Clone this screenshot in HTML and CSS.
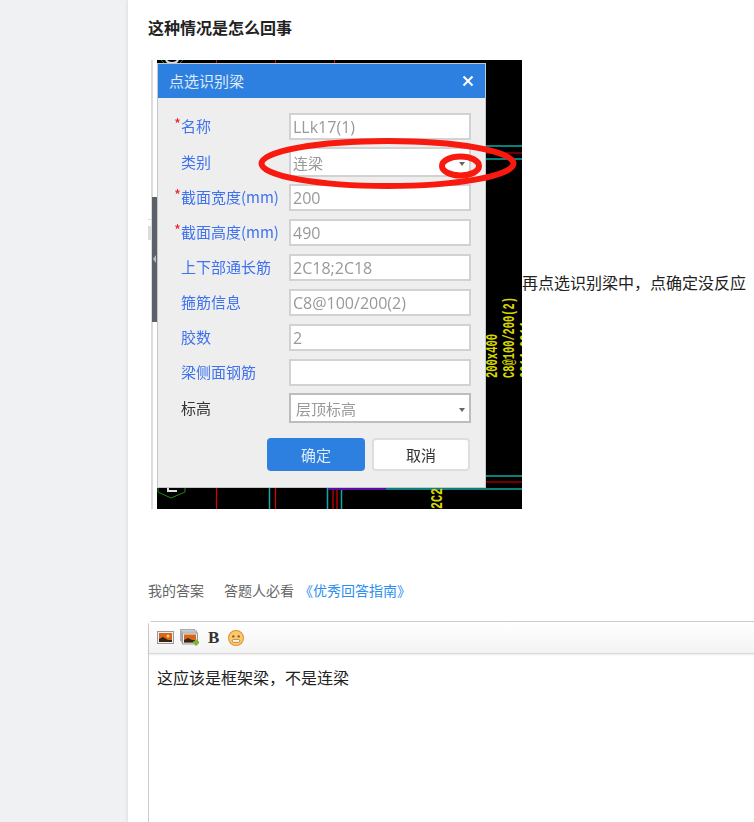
FILE: index.html
```html
<!DOCTYPE html>
<html lang="zh-CN">
<head>
    <meta charset="UTF-8">
    <meta name="viewport" content="width=device-width, initial-scale=1.0">
    <title>这种情况是怎么回事</title>
    <link rel="stylesheet" href="styles.css">
</head>
<body>
    <div class="page">
        <div class="side"></div>
        <div class="main">
            <h1 class="title">这种情况是怎么回事</h1>

            <div class="question">
                <div class="shot">
                    <!-- CAD drawing behind the dialog, viewBox uses page coordinates -->
                    <svg class="art" viewBox="148 60 374 449">
                        <rect x="148" y="60" width="374" height="449" fill="#fff"/>
                        <rect x="151" y="60" width="2" height="449" fill="#dcdcdc"/>
                        <rect x="157" y="60" width="365" height="449" fill="#000"/>
                        <rect x="148" y="219" width="9" height="1" fill="#ddd"/>
                        <rect x="148" y="226" width="9" height="14" fill="#dcdcdc"/>
                        <rect x="152" y="197" width="6" height="125" fill="#5b6168"/>
                        <path d="M156 255l-3 4 3 4z" fill="#b8bcc0"/>
                        <path d="M216.500 60v4M275.500 60v4M334.500 60v4" stroke="#e00000" stroke-width="1"/>
                        <path d="M166 60c2 4 10 4 12 0" stroke="#ddd" stroke-width="2" fill="none"/>
                        <path d="M161 60l3 3M183 60l-3 3" stroke="#1a8a1a" fill="none"/>
                        <path d="M486 146h36M486 159h36M385 476h137M385 489h137M269.500 487v22M327.500 487v22M341.500 487v22" stroke="#0fa8a8" stroke-width="1.500"/>
                        <path d="M486 153h36" stroke="#700000" stroke-width="2"/>
                        <path d="M486 482h36M216.500 487v22M275.500 487v22M333 487v22M337 487v22" stroke="#e00000" stroke-width="1.200"/>
                        <path d="M328 488.500h58" stroke="#5a0ca8" stroke-width="3"/>
                        <path d="M158 487v5l13 6 14-6v-5" stroke="#1a8a1a" fill="none"/>
                        <path d="M168 487v4h9" stroke="#ddd" stroke-width="2" fill="none"/>
                        <g class="cad-text">
                            <text transform="translate(497 378) rotate(-90)" textLength="44" lengthAdjust="spacingAndGlyphs">200x400</text>
                            <text transform="translate(514 378) rotate(-90)" textLength="81" lengthAdjust="spacingAndGlyphs">C8@100/200(2)</text>
                            <text transform="translate(531 378) rotate(-90)" textLength="56" lengthAdjust="spacingAndGlyphs">2C14;2C14</text>
                            <text transform="translate(442 509) rotate(-90)" textLength="28" lengthAdjust="spacingAndGlyphs">2C25</text>
                        </g>
                    </svg>

                    <div class="dialog">
                        <div class="dialog-head">
                            <span>点选识别梁</span>
                            <svg class="close" viewBox="0 0 12 12"><path d="M1.500 1.500l9 9M10.500 1.500l-9 9"/></svg>
                        </div>
                        <div class="dialog-body">
                            <div class="row"><label class="need">名称</label><div class="field">LLk17(1)</div></div>
                            <div class="row tall"><label>类别</label><div class="field select">连梁<i class="arrow"></i></div></div>
                            <div class="row"><label class="need">截面宽度(mm)</label><div class="field">200</div></div>
                            <div class="row"><label class="need">截面高度(mm)</label><div class="field">490</div></div>
                            <div class="row"><label>上下部通长筋</label><div class="field">2C18;2C18</div></div>
                            <div class="row"><label>箍筋信息</label><div class="field">C8@100/200(2)</div></div>
                            <div class="row"><label>胶数</label><div class="field">2</div></div>
                            <div class="row"><label>梁侧面钢筋</label><div class="field"></div></div>
                            <div class="row tall"><label class="plain">标高</label><div class="field select level">层顶标高<i class="arrow"></i></div></div>
                            <div class="buttons">
                                <button class="ok">确定</button>
                                <button class="cancel">取消</button>
                            </div>
                        </div>
                    </div>

                    <!-- red marks drawn over the screenshot -->
                    <svg class="art" viewBox="148 60 374 449">
                        <ellipse cx="387.500" cy="163.500" rx="126" ry="22.500" fill="none" stroke="#f8190f" stroke-width="6"/>
                        <ellipse cx="460.500" cy="166" rx="18.500" ry="9.500" fill="none" stroke="#f8190f" stroke-width="6"/>
                    </svg>
                </div>
                <p class="question-text">再点选识别梁中，点确定没反应</p>
            </div>

            <div class="answer-links">
                <span>我的答案</span>
                <span class="must">答题人必看</span>
                <a href="#">《优秀回答指南》</a>
            </div>

            <div class="editor">
                <div class="toolbar">
                    <svg class="tool" width="17" height="13" viewBox="0 0 17 13">
                        <rect x=".5" y=".5" width="16" height="12" fill="#eee" stroke="#999"/>
                        <rect x="2" y="2" width="13" height="9" fill="#d9661a"/>
                        <circle cx="11" cy="5" r="1.500" fill="#ffd76a"/>
                        <path d="M2 8l4-2 5 3 4 0v2H2z" fill="#3a2412"/>
                    </svg>
                    <svg class="tool multi" width="19" height="17" viewBox="0 0 19 17">
                        <rect x=".5" y=".5" width="14" height="11" fill="#eee" stroke="#aaa"/>
                        <rect x="1.500" y="2" width="15" height="11" fill="#ddd" stroke="#aaa"/>
                        <rect x="2.500" y="4" width="15" height="11" fill="#eee" stroke="#999"/>
                        <rect x="4" y="5.500" width="12" height="8" fill="#d9661a"/>
                        <path d="M4 11l4-2 4 2 4 0v2.500H4z" fill="#3a2412"/>
                        <path d="M13 13.500h6M16 10.500v6" stroke="#7cb82f" stroke-width="2.500"/>
                    </svg>
                    <b class="bold">B</b>
                    <svg class="tool" width="16" height="16" viewBox="0 0 15 15">
                        <circle cx="7.500" cy="7.500" r="7" fill="#fcc96a" stroke="#e0902e"/>
                        <circle cx="5" cy="6" r="1.100" fill="#8a5a20"/>
                        <circle cx="10" cy="6" r="1.100" fill="#8a5a20"/>
                        <rect x="4" y="9" width="7" height="2.500" rx="1" fill="#fff" stroke="#a8692a" stroke-width=".7"/>
                    </svg>
                </div>
                <div class="editor-text">这应该是框架梁，不是连梁</div>
            </div>
        </div>
    </div>
</body>
</html>
```

FILE: styles.css
```css
html, body {
    margin: 0;
    height: 100%;
    overflow: hidden;
    background: #fff;
    font-family: "Noto Sans CJK SC", "Liberation Sans", sans-serif;
}
.page {
    display: flex;
    height: 822px;
    overflow: hidden;
}
.side {
    width: 128px;
    flex: none;
    background: #f0f1f3;
}
.main {
    flex: 1;
    min-width: 0;
    padding: 15px 0 0 20px;
    box-shadow: 0 0 4px rgba(0, 0, 0, 0.12);
}
.title {
    margin: 0;
    font-size: 16px;
    line-height: 24px;
    font-weight: bold;
    color: #222;
}
.question {
    display: flex;
    align-items: center;
    margin-top: 21px;
}
.shot {
    position: relative;
    width: 374px;
    height: 449px;
    flex: none;
}
.art {
    position: absolute;
    top: 0;
    left: 0;
    width: 374px;
    height: 449px;
}
.cad-text {
    font-family: "Liberation Mono", monospace;
    font-size: 16px;
    font-weight: bold;
    fill: #d8d800;
}
.question-text {
    margin: 0;
    padding-bottom: 6px;
    font-size: 16px;
    line-height: 24px;
    color: #222;
    white-space: nowrap;
}

/* dialog inside the screenshot */
.dialog {
    position: absolute;
    top: 4px;
    left: 10px;
    width: 327px;
    height: 423px;
    background: #eeeeee;
    box-shadow: 0 0 0 1px #c4c8cc;
    filter: blur(0.4px);
}
.dialog-head {
    display: flex;
    align-items: center;
    justify-content: space-between;
    height: 34px;
    padding: 0 11px 2px;
    box-sizing: border-box;
    background: #2e80e0;
    color: #dfeafa;
    font-size: 15px;
}
.close {
    width: 12px;
    height: 12px;
    margin-top: 2px;
}
.close path {
    stroke: #fff;
    stroke-width: 2;
    fill: none;
}
.dialog-body {
    padding: 11px 14px 0 16px;
}
.row {
    display: flex;
    align-items: center;
    height: 35px;
}
.row.tall {
    height: 36px;
}
.row label {
    width: 108px;
    padding-left: 7px;
    padding-bottom: 2px;
    flex: none;
    font-size: 15px;
    color: #3f72ee;
    white-space: nowrap;
}
.row label.need {
    position: relative;
}
.row label.need::before {
    content: "*";
    position: absolute;
    left: 0;
    top: -2px;
    color: #f02030;
}
.row label.plain {
    color: #333;
}
.field {
    display: flex;
    align-items: center;
    justify-content: space-between;
    box-sizing: border-box;
    width: 182px;
    height: 27px;
    padding: 0 2px;
    background: #fff;
    border: 2px solid #d2d2d2;
    font-family: "Open Sans", "Noto Sans CJK SC", sans-serif;
    font-size: 16px;
    color: #999;
}
.field.select {
    height: 30px;
    padding-right: 4px;
    font-size: 15px;
}
.field.level {
    padding-left: 5px;
    border-color: #bdbdbd;
}
.arrow {
    width: 0;
    height: 0;
    margin-top: 3px;
    border-left: 3.5px solid transparent;
    border-right: 3.5px solid transparent;
    border-top: 4px solid #666;
}
.buttons {
    display: flex;
    justify-content: flex-end;
    gap: 7px;
    margin-top: 12px;
    padding-right: 1px;
}
.buttons button {
    width: 98px;
    height: 33px;
    border-radius: 4px;
    font-family: "Noto Sans CJK SC", sans-serif;
    font-size: 15px;
}
.ok {
    background: #2e80e0;
    border: none;
    color: #dfeafa;
}
.cancel {
    background: #fff;
    border: 2px solid #dedede;
    color: #333;
}

.answer-links {
    display: flex;
    margin-top: 71px;
    font-size: 14px;
    line-height: 20px;
    color: #666;
}
.must {
    margin-left: 20px;
}
.answer-links a {
    margin-left: 5px;
    color: #2a8ff0;
    text-decoration: none;
}
.editor {
    width: 640px;
    height: 240px;
    margin-top: 21px;
    border: 1px solid #ccc;
    border-radius: 4px 0 0 0;
}
.toolbar {
    display: flex;
    align-items: center;
    height: 31px;
    padding-left: 8px;
    background: linear-gradient(#ffffff, #f3f3f3);
    border-bottom: 1px solid #d8d8d8;
    box-shadow: 0 1px 2px rgba(0, 0, 0, 0.08);
}
.tool.multi {
    margin-left: 6px;
}
.bold {
    margin: 0 9px 0 9px;
    font-family: "Liberation Serif", serif;
    font-size: 17px;
    color: #333;
}
.editor-text {
    padding: 11px 8px;
    font-size: 16px;
    line-height: 24px;
    color: #222;
}
```
